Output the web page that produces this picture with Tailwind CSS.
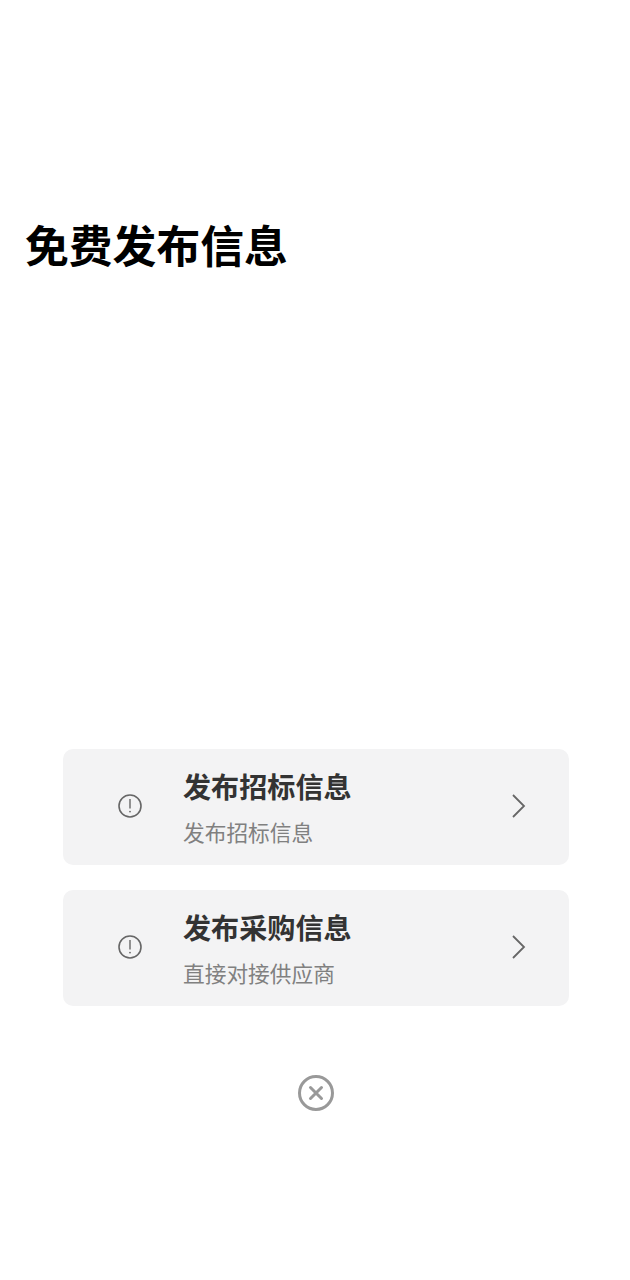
<!DOCTYPE html>
<html lang="zh-CN">
<head>
<meta charset="utf-8">
<script src="https://cdn.jsdelivr.net/npm/@tailwindcss/browser@4"></script>
</head>
<body class="bg-white font-['Noto_Sans_CJK_SC','Noto_Sans',sans-serif]">
<main class="w-[630px] h-[1280px] flex flex-col overflow-hidden">
  <h1 class="mt-[214px] ml-[25px] text-[43.8px] leading-[60px] font-bold text-black">免费发布信息</h1>
  <div class="mt-[475px] ml-[63px] mr-[61px] flex flex-col gap-[25px]">
    <div class="h-[116px] rounded-[10px] bg-[#f3f3f4] flex items-center">
      <svg class="ml-[54px] -mt-[2px] w-[26px] h-[26px] text-[#666]" viewBox="0 0 26 26" fill="none" stroke="currentColor"><circle cx="13" cy="13" r="11" stroke-width="1.6"/><path d="M13 6v9.5" stroke-width="1.4"/><circle cx="13" cy="18.6" r=".9" fill="currentColor" stroke="none"/></svg>
      <div class="ml-[40px] flex-1 flex flex-col">
        <div class="-mt-[1px] text-[28.1px] leading-[38px] font-bold text-[#333]">发布招标信息</div>
        <div class="mt-[12px] text-[21.7px] leading-[30px] text-[#808080]">发布招标信息</div>
      </div>
      <svg class="mr-[42px] -mt-[2px] w-[16px] h-[26px] text-[#666]" viewBox="0 0 16 26" fill="none" stroke="currentColor" stroke-width="1.8"><path d="M2 2l11 11L2 24"/></svg>
    </div>
    <div class="h-[116px] rounded-[10px] bg-[#f3f3f4] flex items-center">
      <svg class="ml-[54px] -mt-[2px] w-[26px] h-[26px] text-[#666]" viewBox="0 0 26 26" fill="none" stroke="currentColor"><circle cx="13" cy="13" r="11" stroke-width="1.6"/><path d="M13 6v9.5" stroke-width="1.4"/><circle cx="13" cy="18.6" r=".9" fill="currentColor" stroke="none"/></svg>
      <div class="ml-[40px] flex-1 flex flex-col">
        <div class="-mt-[1px] text-[28.1px] leading-[38px] font-bold text-[#333]">发布采购信息</div>
        <div class="mt-[12px] text-[21.7px] leading-[30px] text-[#808080]">直接对接供应商</div>
      </div>
      <svg class="mr-[42px] -mt-[2px] w-[16px] h-[26px] text-[#666]" viewBox="0 0 16 26" fill="none" stroke="currentColor" stroke-width="1.8"><path d="M2 2l11 11L2 24"/></svg>
    </div>
  </div>
  <div class="mt-[69px] ml-[298px]">
    <svg class="w-[36px] h-[36px] text-[#999]" viewBox="0 0 36 36" fill="none" stroke="currentColor"><circle cx="18" cy="18" r="16.5" stroke-width="3"/><path d="M12.5 12.5l11 11M23.5 12.5l-11 11" stroke-width="3" stroke-linecap="round"/></svg>
  </div>
</main>
</body>
</html>
